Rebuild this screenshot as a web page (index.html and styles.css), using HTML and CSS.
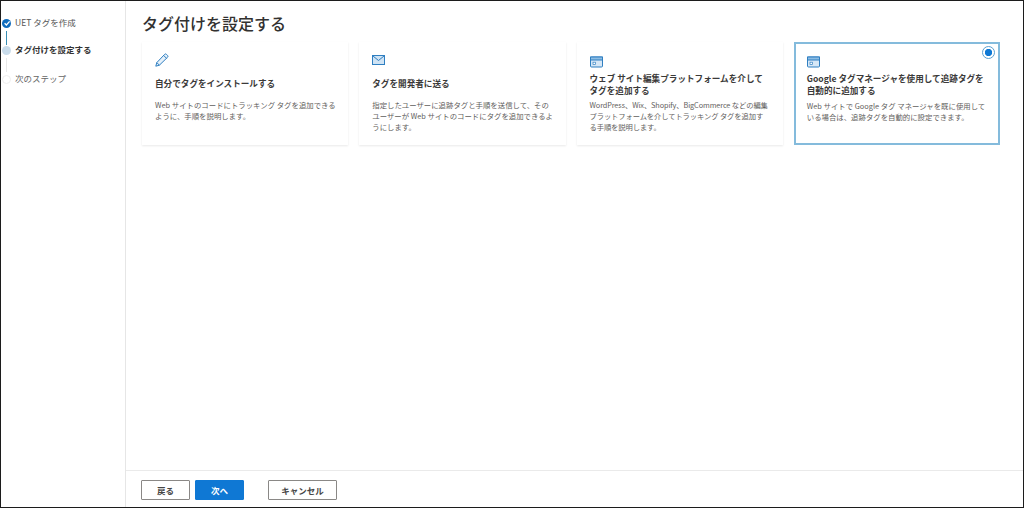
FILE: index.html
```html
<!DOCTYPE html>
<html lang="ja">
<head>
<meta charset="utf-8">
<title>タグ付けを設定する</title>
<link rel="stylesheet" href="styles.css">
</head>
<body>
<div class="frame">
  <nav class="side">
    <div class="step done">
      <span class="dot"><svg viewBox="0 0 10 10" width="10" height="10"><path d="M2.6 5.2 4.4 7 7.6 3.4" fill="none" stroke="#fff" stroke-width="1.3"/></svg></span>
      <span class="step-label">UET タグを作成</span>
    </div>
    <div class="step current">
      <span class="dot"></span>
      <span class="step-label">タグ付けを設定する</span>
    </div>
    <div class="step next">
      <span class="dot"></span>
      <span class="step-label">次のステップ</span>
    </div>
  </nav>
  <main class="main">
    <div class="content">
      <h1 class="title">タグ付けを設定する</h1>
      <div class="cards">
        <section class="card">
          <svg class="icon" viewBox="0 0 14 14" width="14" height="14"><path d="M.8 13.2 1.8 9.6 9.6 1.4a1.3 1.3 0 0 1 1.9 0l1 1a1.3 1.3 0 0 1 0 1.9L4.4 12.2.8 13.2ZM1.8 9.6 4.4 12.2M8.6 2.4l3 3" fill="#e6f1fa" stroke="#2f7fc1" stroke-width="1"/></svg>
          <div class="head one"><h2>自分でタグをインストールする</h2></div>
          <p>Web サイトのコードにトラッキング タグを追加できるように、手順を説明します。</p>
        </section>
        <section class="card">
          <svg class="icon" viewBox="0 0 14 14" width="14" height="14"><rect x=".5" y="2.5" width="12" height="9" fill="#cfe3f4" stroke="#2f7fc1"/><path d="M1 3 6.5 7.5 12 3" fill="none" stroke="#2f7fc1"/></svg>
          <div class="head one"><h2>タグを開発者に送る</h2></div>
          <p>指定したユーザーに追跡タグと手順を送信して、そのユーザーが Web サイトのコードにタグを追加できるようにします。</p>
        </section>
        <section class="card">
          <svg class="icon low" viewBox="0 0 14 14" width="14" height="14"><rect x=".5" y="2" width="12" height="10" rx="1" fill="#d6e7f6" stroke="#2f7fc1"/><rect x=".5" y="2" width="12" height="3" fill="#8dbde4" stroke="#2f7fc1"/><rect x="3" y="7.2" width="2.6" height="2.2" fill="#fff" stroke="#2f7fc1" stroke-width=".7"/></svg>
          <div class="head"><h2>ウェブ サイト編集プラットフォームを介してタグを追加する</h2></div>
          <p class="tight">WordPress、Wix、Shopify、BigCommerce などの編集<br>プラットフォームを介してトラッキング タグを追加す<br>る手順を説明します。</p>
        </section>
        <section class="card selected">
          <span class="radio"></span>
          <svg class="icon low" viewBox="0 0 14 14" width="14" height="14"><rect x=".5" y="2" width="12" height="10" rx="1" fill="#d6e7f6" stroke="#2f7fc1"/><rect x=".5" y="2" width="12" height="3" fill="#8dbde4" stroke="#2f7fc1"/><rect x="3" y="7.2" width="2.6" height="2.2" fill="#fff" stroke="#2f7fc1" stroke-width=".7"/></svg>
          <div class="head"><h2>Google タグマネージャを使用して追跡タグを自動的に追加する</h2></div>
          <p>Web サイトで Google タグ マネージャを既に使用している場合は、追跡タグを自動的に設定できます。</p>
        </section>
      </div>
    </div>
    <footer class="footer">
      <button class="btn back">戻る</button>
      <button class="btn primary">次へ</button>
      <button class="btn cancel">キャンセル</button>
    </footer>
  </main>
</div>
</body>
</html>
```
FILE: styles.css
```css
* { box-sizing: border-box; }
html, body { margin: 0; padding: 0; background: #fff; }
body {
  width: 1024px;
  height: 514px;
  overflow: hidden;
  font-family: "Noto Sans CJK JP", "Liberation Sans", sans-serif;
  color: #323130;
}
.frame {
  display: flex;
  width: 1024px;
  height: 508px;
  border: 1px solid #1c1c1c;
}
.side {
  width: 125px;
  flex: none;
  border-right: 1px solid #e6e6e6;
  padding-top: 15px;
  display: flex;
  flex-direction: column;
}
.step {
  position: relative;
  display: flex;
  align-items: center;
  height: 14px;
  font-size: 8.5px;
  line-height: 14px;
  color: #555;
}
.step.current { margin-top: 13px; font-weight: 700; color: #333; }
.step.next { margin-top: 15px; color: #666; }
.step-label { margin-left: 4px; margin-bottom: 2px; white-space: nowrap; }
.dot {
  width: 9px;
  height: 9px;
  margin-left: 1px;
  border-radius: 50%;
  flex: none;
  display: flex;
  align-items: center;
  justify-content: center;
}
.done .dot { background: #0f6cbd; }
.done .dot svg { flex: none; }
.current .dot { background: #c9dceb; }
.next .dot { background: #fff; border: 1px solid #eee; }
.step.current::before,
.step.next::before {
  content: "";
  position: absolute;
  left: 5px;
  width: 1px;
}
.step.current::before { top: -12px; height: 14px; background: #3a8fb5; }
.step.next::before { top: -14px; height: 14px; background: #e8e8e8; }
.main {
  flex: 1;
  min-width: 0;
  display: flex;
  flex-direction: column;
}
.content { flex: 1; padding: 12px 23px 0 16px; }
.title {
  margin: 0;
  height: 29px;
  font-size: 16px;
  line-height: 20px;
  font-weight: 500;
  color: #323130;
}
.cards {
  display: grid;
  grid-template-columns: repeat(4, 1fr);
  column-gap: 11px;
}
.card {
  position: relative;
  height: 103px;
  padding: 11px 12px 0 13px;
  background: #fff;
  box-shadow: 0 1px 2px rgba(0,0,0,.09);
}
.card.selected {
  border: 2px solid #84bbdc;
  box-shadow: none;
  padding: 9px 10px 0 11px;
}
.icon { display: block; }
.icon.low { margin-top: 2px; }
.head {
  height: 24px;
  margin-top: 3px;
  display: flex;
  align-items: center;
}
.head.one { margin-top: 4px; }
.head h2 {
  margin: 0;
  max-width: 178px;
  font-size: 8.6px;
  line-height: 12px;
  font-weight: 700;
  color: #3b3a39;
}
.card p {
  margin: 4px 0 0;
  font-size: 7.4px;
  line-height: 11px;
  color: #5f5e5d;
}
.card p.tight { font-size: 7.3px; letter-spacing: -.1px; }
.radio {
  position: absolute;
  top: 2px;
  right: 3.5px;
  width: 13px;
  height: 13px;
  border-radius: 50%;
  background: radial-gradient(circle, #0f78d4 0 3.4px, #fff 3.9px);
  border: 1px solid #5aa0d2;
}
.footer {
  height: 37px;
  flex: none;
  border-top: 1px solid #eaeaea;
  padding: 9px 0 0 15px;
  display: flex;
  align-items: flex-start;
  gap: 5px;
}
.btn {
  height: 20px;
  padding: 0;
  border: 1px solid #8a8886;
  border-radius: 1px;
  background: #fff;
  font: 700 8.5px/18px "Noto Sans CJK JP", "Liberation Sans", sans-serif;
  color: #444;
}
.back { width: 49px; }
.primary { width: 49px; background: #0f78d4; border-color: #0f78d4; color: #fff; }
.cancel { width: 69px; margin-left: 19px; }
```
